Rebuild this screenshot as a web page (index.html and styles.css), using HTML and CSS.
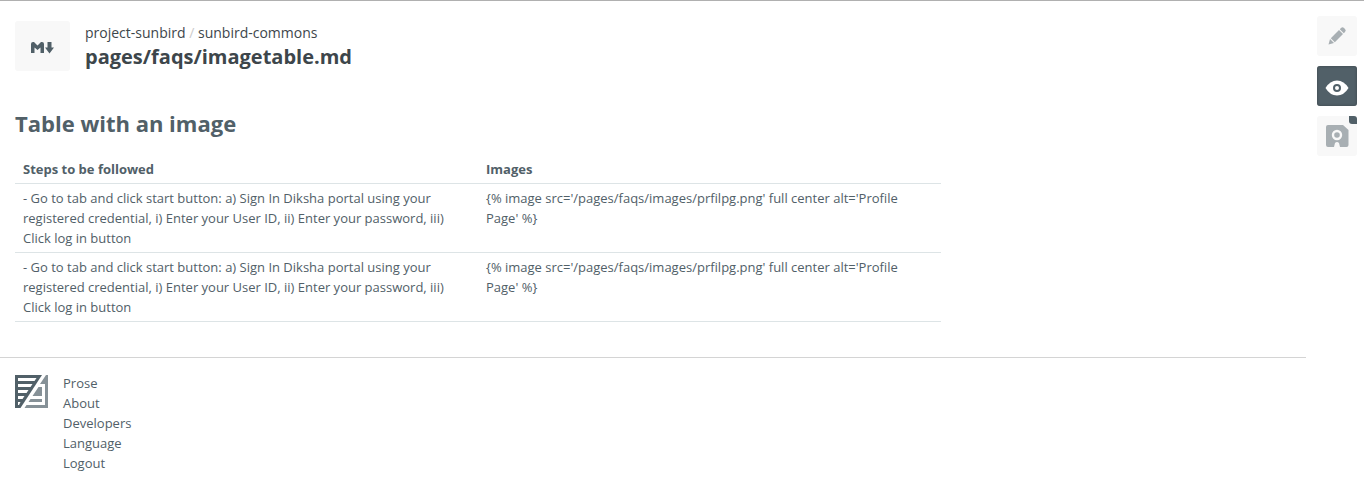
FILE: index.html
```
<!DOCTYPE html>
<html lang="en">
<head>
<meta charset="utf-8">
<title>pages/faqs/imagetable.md</title>
<link rel="stylesheet" href="styles.css">
</head>
<body>
<div class="app">
  <main class="content">
    <header class="heading">
      <div class="filetype">
        <svg width="23" height="12" viewBox="0 0 23 12" fill="#516068"><path d="M0 11V2Q0 0 2 0H3L6.500 3.500 10 0H11Q13 0 13 2V11H9.500V5.500L6.500 8 3.500 5.500V11ZM16.500 0H20.500V5.500H23L18.500 11.500 14 5.500H16.500Z"/></svg>
      </div>
      <div class="titles">
        <div class="crumbs"><a>project-sunbird</a> <span class="slash">/</span> <a>sunbird-commons</a></div>
        <h1 class="filename">pages/faqs/imagetable.md</h1>
      </div>
    </header>
    <section class="preview">
      <h2 class="title">Table with an image</h2>
      <table class="table">
        <thead><tr><th>Steps to be followed</th><th>Images</th></tr></thead>
        <tbody>
          <tr><td>- Go to tab and click start button: a) Sign In Diksha portal using your registered credential, i) Enter your User ID, ii) Enter your password, iii) Click log in button</td><td>{% image src='/pages/faqs/images/prfilpg.png' full center alt='Profile Page' %}</td></tr>
          <tr><td>- Go to tab and click start button: a) Sign In Diksha portal using your registered credential, i) Enter your User ID, ii) Enter your password, iii) Click log in button</td><td>{% image src='/pages/faqs/images/prfilpg.png' full center alt='Profile Page' %}</td></tr>
        </tbody>
      </table>
    </section>
    <footer class="footer">
      <svg class="logo" width="33" height="33" viewBox="0 0 33 33">
        <path fill="#516068" d="M0 0H27L5.500 33H0Z"/>
        <path fill="#fff" d="M3 3H21.500L19.500 6H3ZM3 9H17.500L15.500 12H3ZM3 15H13.500L11.500 18H3ZM3 21H9.500L7.500 24H3ZM3 27H5.500L4 30H3Z"/>
        <path fill="#869197" d="M31 0H33V33H9.500L11.500 30H30V9H25Z"/>
        <path fill="#869197" d="M23.500 12H27V21H17.500ZM15.500 24H27V27H13.500Z"/>
      </svg>
      <ul class="links"><li>Prose</li><li>About</li><li>Developers</li><li>Language</li><li>Logout</li></ul>
    </footer>
  </main>
  <nav class="tools">
    <div class="tool"><svg width="20" height="20" viewBox="0 0 20 20" fill="#a8afb3"><path d="M1.500 18.500L3 13 7 17ZM3.800 12.200L12 4 16 8 7.800 16.200ZM12.800 3.200L14 2Q15.500 .5 17 2L18 3Q19.500 4.500 18 6L16.800 7.200Z"/></svg></div>
    <div class="tool active"><svg width="24" height="16" viewBox="0 0 24 16"><path fill="#fff" d="M.5 8Q5 .5 12 .5T23.500 8Q19 15.500 12 15.500T.5 8Z"/><circle cx="12" cy="8" r="3" fill="#fff" stroke="#516068" stroke-width="2"/></svg></div>
    <div class="tool"><svg width="24" height="22" viewBox="0 0 24 22"><path fill="#a8afb3" d="M3 0H18L23.500 5V20Q23.500 22 21.500 22H15L14 18Q12 16 10 18L9 22H3Q1 22 1 20V2Q1 0 3 0Z"/><circle cx="12" cy="10" r="4" fill="none" stroke="#f8f8f8" stroke-width="2.400"/></svg><span class="dirty"></span></div>
  </nav>
</div>
</body>
</html>
```
FILE: styles.css
```
* { box-sizing: border-box; }
body { margin: 0; background: #fff; color: #516068; font: 13px/20px "Open Sans", sans-serif; }
.app { display: flex; height: 495px; border-top: 1px solid #b0b0b0; }
.content { width: 1306px; }
.heading { display: flex; gap: 15px; padding: 20px 15px 0; }
.filetype { display: flex; align-items: center; justify-content: center; width: 55px; height: 50px; border-radius: 3px; background: #f8f8f8; padding-top: 3px; }
.titles { padding-top: 2px; }
.crumbs { font-size: 14px; line-height: 20px; color: #3d464b; }
.slash { color: #ccc; }
.filename { margin: 0; font-size: 20px; line-height: 28px; color: #3d464b; }
.preview { padding: 37px 15px 35px; }
.title { margin: 0 0 17px; font-size: 22px; line-height: 30px; }
.table { width: 926px; table-layout: fixed; border-collapse: separate; border-spacing: 0; }
.table th, .table td { padding: 4px 8px; border-bottom: 1px solid #dde4e6; text-align: left; vertical-align: top; }
.footer { display: flex; gap: 15px; padding: 15px; border-top: 1px solid #d4d4d4; }
.logo { margin-top: 2px; }
.links { margin: 0; padding: 0; list-style: none; }
.tools { display: flex; flex-direction: column; gap: 10px; padding: 15px 0 0 11px; }
.tool { position: relative; display: flex; align-items: center; justify-content: center; width: 40px; height: 40px; border-radius: 3px; background: #f8f8f8; }
.active { background: #516068; box-shadow: inset 0 0 3px #3d464b; padding-top: 3px; }
.dirty { position: absolute; top: 0; right: 0; width: 8px; height: 8px; background: #516068; border-radius: 0 3px 0 3px; }
```
